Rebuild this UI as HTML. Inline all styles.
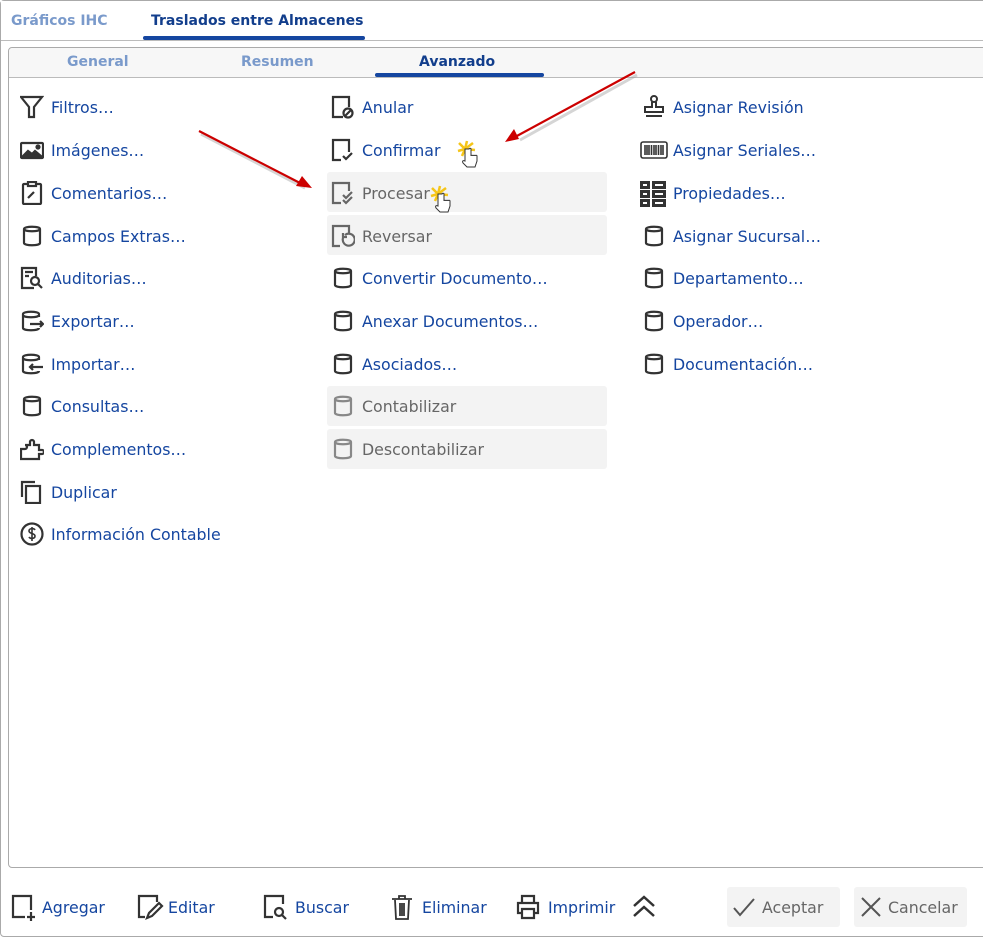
<!DOCTYPE html>
<html><head><meta charset="utf-8"><style>
*{margin:0;padding:0;box-sizing:border-box}
body{width:983px;height:940px;background:#fff;font-family:"DejaVu Sans","Liberation Sans",sans-serif;position:relative;overflow:hidden}
.outer{position:absolute;left:0;top:0;width:990px;height:937px;border:1px solid #aaa;border-radius:4px;background:#fff}
.topbar{position:absolute;left:1px;top:1px;width:990px;height:40px;border-bottom:1px solid #bbb;background:#fff}
.tab{position:absolute;font-weight:bold;font-size:14px;top:13px}
.inner{position:absolute;left:8px;top:47px;width:990px;height:821px;border:1px solid #aaa;border-radius:4px;background:#fff}
.tabs2{position:absolute;left:0;top:0;width:100%;height:30px;background:#f7f7f7;border-bottom:1px solid #bbb;border-radius:4px 4px 0 0}
.it{position:absolute;height:28px;line-height:30px;font-size:15.8px;color:#1546a0;white-space:nowrap}
.it svg{position:absolute;left:0;top:2px}
.it span{position:absolute;left:31px;top:0}
.dis{color:#666}
.box{position:absolute;left:327px;width:280px;height:40px;background:#f3f3f3;border-radius:3px}
.bt{position:absolute;top:894px;font-size:15.8px;color:#1546a0;line-height:28px;white-space:nowrap}
.bt svg{position:absolute;top:0}
.gb{position:absolute;top:887px;height:40px;background:#f3f3f3;border-radius:3px;color:#666;font-size:15.8px;line-height:41px}
</style></head><body>
<div class="outer"></div>
<div class="topbar"></div>
<div class="tab" style="left:11px;color:#7a9acb">Gráficos IHC</div>
<div class="tab" style="left:151px;color:#123e8c">Traslados entre Almacenes</div>
<div style="position:absolute;left:143px;top:36px;width:222px;height:4px;background:#1546a0;border-radius:2px"></div>
<div class="inner"><div class="tabs2"></div></div>
<div class="tab" style="left:67px;top:54px;color:#7a9acb">General</div>
<div class="tab" style="left:241px;top:54px;color:#7a9acb">Resumen</div>
<div class="tab" style="left:419px;top:54px;color:#123e8c">Avanzado</div>
<div style="position:absolute;left:375px;top:73px;width:169px;height:4px;background:#1546a0;border-radius:2px"></div>

<div class="box" style="top:172px"></div>
<div class="box" style="top:215px"></div>
<div class="box" style="top:386px"></div>
<div class="box" style="top:429px"></div>

<!-- column 1 -->
<div class="it" style="left:20px;top:93px"><svg width="24" height="24" fill="none" stroke="#333" stroke-width="2.2"><path d="M1 2h21l-8 10v10h-5V12z"/></svg><span>Filtros…</span></div>
<div class="it" style="left:20px;top:136px"><svg width="24" height="24" fill="none" stroke="#333" stroke-width="2.2"><rect x="1" y="5" width="22" height="15" rx="1"/><path d="M3 18l5-5 4 3 3-3 6 5z" fill="#333"/><circle cx="18" cy="9" r="1.5" fill="#333"/></svg><span>Imágenes…</span></div>
<div class="it" style="left:20px;top:179px"><svg width="24" height="24" fill="none" stroke="#333" stroke-width="2.2"><rect x="3" y="3" width="18" height="20" rx="1"/><rect x="8" y="1" width="8" height="4" fill="#fff"/><path d="M8 17l6-6"/></svg><span>Comentarios…</span></div>
<div class="it" style="left:20px;top:222px"><svg width="24" height="24" fill="none" stroke="#333" stroke-width="2.2"><path d="M4 5c0-3 16-3 16 0v14c0 3-16 3-16 0zM4 5c0 3 16 3 16 0"/></svg><span>Campos Extras…</span></div>
<div class="it" style="left:20px;top:264px"><svg width="24" height="24" fill="none" stroke="#333" stroke-width="2.2"><path d="M14 22H2V2h14v8M5 6h8M5 10h4"/><circle cx="15" cy="15" r="4"/><path d="M18 18l4 4"/></svg><span>Auditorias…</span></div>
<div class="it" style="left:20px;top:307px"><svg width="24" height="24" fill="none" stroke="#333" stroke-width="2.2"><path d="M19 8V5c0-3-16-3-16 0v14c0 3 16 3 16 0M3 6c0 3 16 3 16 0M10 15h13M20 12l3 3-3 3"/></svg><span>Exportar…</span></div>
<div class="it" style="left:20px;top:350px"><svg width="24" height="24" fill="none" stroke="#333" stroke-width="2.2"><path d="M19 8V5c0-3-16-3-16 0v14c0 3 16 3 16 0M3 6c0 3 16 3 16 0M10 15h13M13 12l-3 3 3 3"/></svg><span>Importar…</span></div>
<div class="it" style="left:20px;top:392px"><svg width="24" height="24" fill="none" stroke="#333" stroke-width="2.2"><path d="M4 5c0-3 16-3 16 0v14c0 3-16 3-16 0zM4 5c0 3 16 3 16 0"/></svg><span>Consultas…</span></div>
<div class="it" style="left:20px;top:435px"><svg width="24" height="24" fill="none" stroke="#333" stroke-width="2.2"><path d="M1 12h4a2 2 0 1 0 0-4V8h5V5a2 2 0 1 1 4 0v3h5v5h3a2 2 0 0 1 0 4h-3v5H1z"/></svg><span>Complementos…</span></div>
<div class="it" style="left:20px;top:478px"><svg width="24" height="24" fill="none" stroke="#333" stroke-width="2.2"><path d="M2 17V2h13"/><rect x="6" y="6" width="14" height="17"/></svg><span>Duplicar</span></div>
<div class="it" style="left:20px;top:520px"><svg width="24" height="24" fill="none" stroke="#333" stroke-width="2.2"><circle cx="12" cy="12" r="10.5"/><path d="M15 8c-1-2-6-2-6 1s6 2 6 5-5 3-6 1M12 5v14" stroke-width="1.6"/></svg><span>Información Contable</span></div>

<!-- column 2 -->
<div class="it" style="left:331px;top:93px"><svg width="24" height="24" fill="none" stroke="#333" stroke-width="2.2"><path d="M12 22H2V2h16v10"/><circle cx="17" cy="18" r="4.5"/><path d="M14 21l6-6"/></svg><span>Anular</span></div>
<div class="it" style="left:331px;top:136px"><svg width="24" height="24" fill="none" stroke="#333" stroke-width="2.2"><path d="M10 22H2V2h16v12M12 18l3 3 6-6"/></svg><span>Confirmar</span></div>
<div class="it dis" style="left:331px;top:179px"><svg width="24" height="24" fill="none" stroke="#666" stroke-width="2.2"><path d="M10 22H2V2h16v8M12 14l3 3 6-6M12 19l3 3 6-6"/></svg><span>Procesar</span></div>
<div class="it dis" style="left:331px;top:222px"><svg width="24" height="24" fill="none" stroke="#666" stroke-width="2.2"><path d="M9 22H2V2h16v8"/><path d="M12 14a6 6 0 1 0 2-3M12 9v4h4"/></svg><span>Reversar</span></div>
<div class="it" style="left:331px;top:264px"><svg width="24" height="24" fill="none" stroke="#333" stroke-width="2.2"><path d="M4 5c0-3 16-3 16 0v14c0 3-16 3-16 0zM4 5c0 3 16 3 16 0"/></svg><span>Convertir Documento…</span></div>
<div class="it" style="left:331px;top:307px"><svg width="24" height="24" fill="none" stroke="#333" stroke-width="2.2"><path d="M4 5c0-3 16-3 16 0v14c0 3-16 3-16 0zM4 5c0 3 16 3 16 0"/></svg><span>Anexar Documentos…</span></div>
<div class="it" style="left:331px;top:350px"><svg width="24" height="24" fill="none" stroke="#333" stroke-width="2.2"><path d="M4 5c0-3 16-3 16 0v14c0 3-16 3-16 0zM4 5c0 3 16 3 16 0"/></svg><span>Asociados…</span></div>
<div class="it dis" style="left:331px;top:392px"><svg width="24" height="24" fill="none" stroke="#888" stroke-width="2.2"><path d="M4 5c0-3 16-3 16 0v14c0 3-16 3-16 0zM4 5c0 3 16 3 16 0"/></svg><span>Contabilizar</span></div>
<div class="it dis" style="left:331px;top:435px"><svg width="24" height="24" fill="none" stroke="#888" stroke-width="2.2"><path d="M4 5c0-3 16-3 16 0v14c0 3-16 3-16 0zM4 5c0 3 16 3 16 0"/></svg><span>Descontabilizar</span></div>

<!-- column 3 -->
<div class="it" style="left:642px;top:93px"><svg width="24" height="24" fill="none" stroke="#333" stroke-width="2"><circle cx="12" cy="4" r="3"/><path d="M10 7v5H3v5h18v-5h-7V7M4 21h16"/></svg><span>Asignar Revisión</span></div>
<div class="it" style="left:640px;top:136px"><svg width="28" height="24" fill="none" stroke="#333" stroke-width="1.6"><rect x="1" y="4" width="26" height="16" rx="2"/><path d="M5 7v10M7 7v10M9 7v10M11.5 7v10M14 7v10M16 7v10M18.5 7v10M21 7v10M23 7v10"/></svg><span style="left:33px">Asignar Seriales…</span></div>
<div class="it" style="left:640px;top:179px"><svg width="26" height="26" fill="#333"><path d="M0 0h10v8H0zM12 0h14v8H12zM0 9h10v8H0zM12 9h14v8H12zM0 18h10v8H0zM12 18h14v8H12z"/><path d="M3 3h4v2H3zM15 3h8v2h-8zM3 12h4v2H3zM15 12h8v2h-8zM3 21h4v2H3zM15 21h8v2h-8z" fill="#fff"/></svg><span style="left:33px">Propiedades…</span></div>
<div class="it" style="left:642px;top:222px"><svg width="24" height="24" fill="none" stroke="#333" stroke-width="2.2"><path d="M4 5c0-3 16-3 16 0v14c0 3-16 3-16 0zM4 5c0 3 16 3 16 0"/></svg><span>Asignar Sucursal…</span></div>
<div class="it" style="left:642px;top:264px"><svg width="24" height="24" fill="none" stroke="#333" stroke-width="2.2"><path d="M4 5c0-3 16-3 16 0v14c0 3-16 3-16 0zM4 5c0 3 16 3 16 0"/></svg><span>Departamento…</span></div>
<div class="it" style="left:642px;top:307px"><svg width="24" height="24" fill="none" stroke="#333" stroke-width="2.2"><path d="M4 5c0-3 16-3 16 0v14c0 3-16 3-16 0zM4 5c0 3 16 3 16 0"/></svg><span>Operador…</span></div>
<div class="it" style="left:642px;top:350px"><svg width="24" height="24" fill="none" stroke="#333" stroke-width="2.2"><path d="M4 5c0-3 16-3 16 0v14c0 3-16 3-16 0zM4 5c0 3 16 3 16 0"/></svg><span>Documentación…</span></div>

<!-- arrows & cursors -->
<svg style="position:absolute;left:0;top:0" width="983" height="240">
<g stroke="#999" stroke-width="3" opacity=".4"><line x1="201" y1="134" x2="305" y2="188"/><line x1="637" y1="75" x2="520" y2="140"/></g>
<g stroke="#c00" stroke-width="2.2"><line x1="199" y1="131" x2="300" y2="183"/><line x1="635" y1="72" x2="515" y2="137"/></g>
<path d="M312 188l-16-2 6-10z" fill="#c00"/><path d="M505 142l9-13 5 10z" fill="#c00"/>
<g transform="translate(457,141)"><path d="M8 8l-6-6M8 8l8-6M8 8l10 1M8 8l-7 2M8 8l2-8M8 8l-3 7" stroke="#f5c518" stroke-width="2.5"/><path d="M8 8v12c-2-1-3 0-2 2l4 4h8l2-6v-5c0-1-2-1-2 0 0-1-2-1-2 0 0-1-2-1-2 0v-7c0-1-2-1-2 0z" fill="#fff" stroke="#333" stroke-width="1"/></g>
<g transform="translate(430,186)"><path d="M8 8l-6-6M8 8l8-6M8 8l10 1M8 8l-7 2M8 8l2-8M8 8l-3 7" stroke="#f5c518" stroke-width="2.5"/><path d="M8 8v12c-2-1-3 0-2 2l4 4h8l2-6v-5c0-1-2-1-2 0 0-1-2-1-2 0 0-1-2-1-2 0v-7c0-1-2-1-2 0z" fill="#fff" stroke="#333" stroke-width="1"/></g>
</svg>

<!-- bottom toolbar -->
<div class="bt" style="left:11px"><svg width="28" height="28" fill="none" stroke="#333" stroke-width="2.2" style="left:0"><path d="M14 23H2V2h18v14M20 18v9M16 23h8"/></svg><span style="margin-left:31px">Agregar</span></div>
<div class="bt" style="left:137px"><svg width="28" height="28" fill="none" stroke="#333" stroke-width="2.2" style="left:0"><path d="M8 23H2V2h18v6M10 24l2-5 10-10 3 3-10 10z"/></svg><span style="margin-left:31px">Editar</span></div>
<div class="bt" style="left:263px"><svg width="28" height="28" fill="none" stroke="#333" stroke-width="2.2" style="left:0"><path d="M10 23H2V2h18v8"/><circle cx="16" cy="18" r="4"/><path d="M19 21l4 4"/></svg><span style="margin-left:32px">Buscar</span></div>
<div class="bt" style="left:390px"><svg width="28" height="28" fill="none" stroke="#333" stroke-width="2.2" style="left:0"><path d="M2 5h20M9 5V2h6v3M5 6l1 19h12l1-19M10 9v13M12 9v13M14 9v13" stroke-width="1.8"/></svg><span style="margin-left:32px">Eliminar</span></div>
<div class="bt" style="left:516px"><svg width="28" height="28" fill="none" stroke="#333" stroke-width="2.2" style="left:0"><path d="M6 8V2h12v6M6 19H2V9h20v10h-4M6 15h12v9H6z"/></svg><span style="margin-left:32px">Imprimir</span></div>
<svg style="position:absolute;left:631px;top:895px" width="26" height="24" fill="none" stroke="#333" stroke-width="2.5"><path d="M3 11l10-9 10 9M3 21l10-9 10 9"/></svg>
<div class="gb" style="left:727px;width:113px"><svg width="24" height="24" style="position:absolute;left:5px;top:8px" fill="none" stroke="#555" stroke-width="2"><path d="M2 13l6 7L22 4"/></svg><span style="margin-left:35px">Aceptar</span></div>
<div class="gb" style="left:854px;width:113px"><svg width="24" height="24" style="position:absolute;left:5px;top:8px" fill="none" stroke="#555" stroke-width="2"><path d="M3 3l18 18M21 3L3 21"/></svg><span style="margin-left:34px">Cancelar</span></div>
</body></html>
